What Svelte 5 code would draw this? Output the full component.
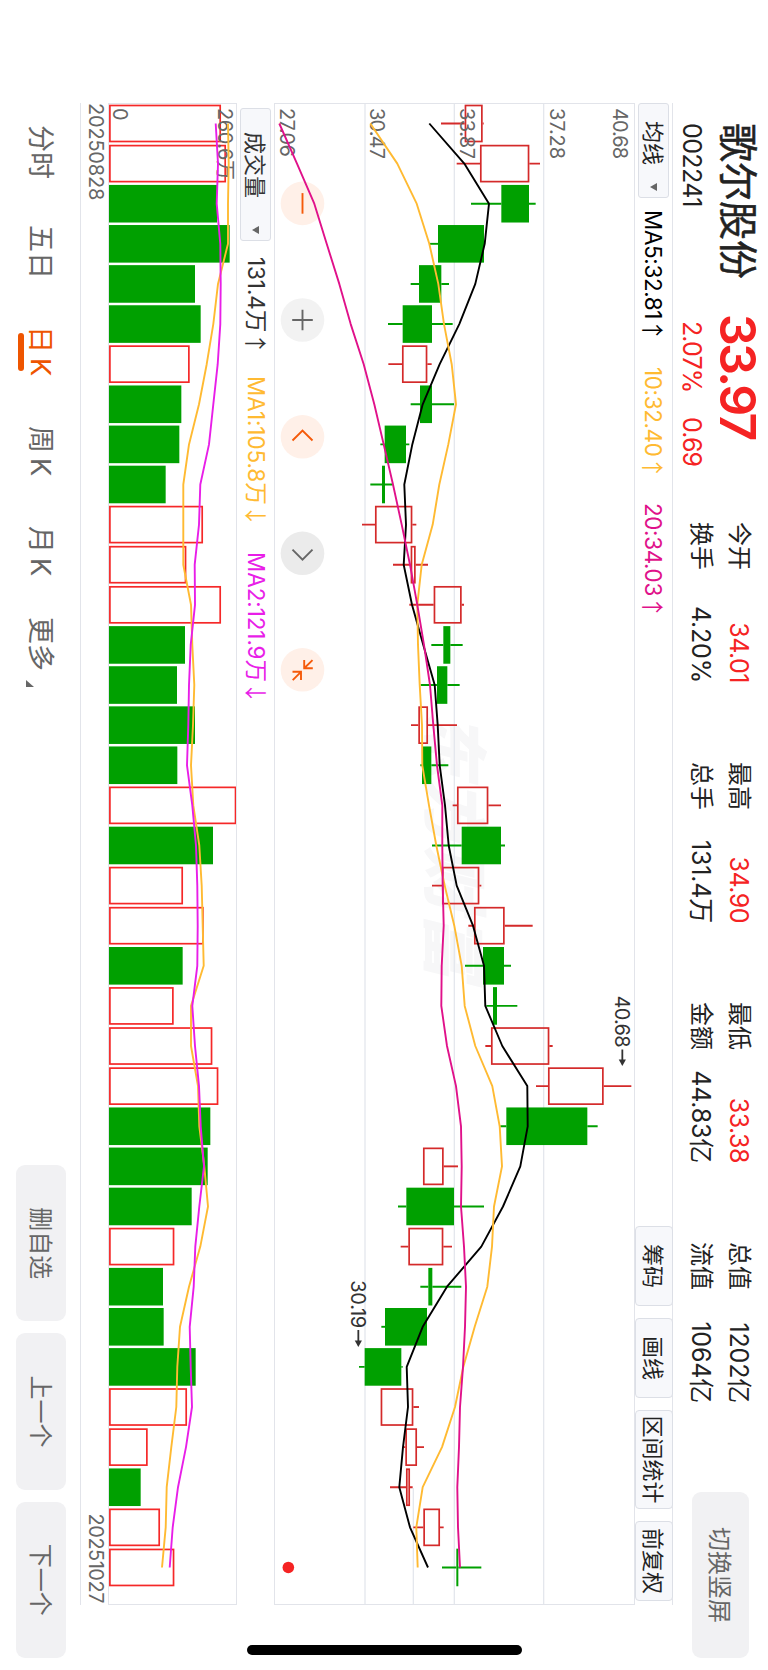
<script>
  const step = 40.11;
  const first = 19.5;
  const candleWidth = 37.6;

  // levels are measured in thirds of a pixel: [kind, low, body bottom, body top, high]
  const candles = [
    ['up', 543, 614, 668, 671],
    ['up', 590, 660, 808, 840],
    ['down', 633, 724, 807, 827],
    ['down', 509, 534, 672, 672],
    ['down', 452, 477, 544, 567],
    ['down', 384, 428, 516, 578],
    ['up', 385, 426, 502, 515],
    ['down', 452, 480, 516, 582],
    ['down', 361, 374, 438, 448],
    ['down', 331, 366, 375, 398],
    ['up', 306, 345, 457, 469],
    ['up', 399, 452, 467, 504],
    ['up', 448, 521, 605, 612],
    ['down', 514, 550, 571, 608],
    ['down', 482, 531, 562, 599],
    ['up', 453, 475, 504, 591],
    ['down', 481, 486, 514, 565],
    ['up', 578, 591, 685, 723],
    ['down', 516, 605, 723, 735],
    ['up', 516, 546, 658, 664],
    ['up', 625, 642, 734, 818],
    ['down', 615, 669, 732, 753],
    ['down', 679, 699, 711, 772],
    ['up', 676, 693, 868, 878],
    ['up', 828, 864, 1031, 1114],
    ['down', 721, 739, 982, 1013],
    ['up', 489, 489, 551, 594],
    ['down', 414, 439, 582, 672],
    ['up', 422, 445, 550, 576],
    ['down', 481, 505, 517, 604],
    ['down', 364, 375, 501, 501],
    ['down', 297, 314, 424, 428],
    ['up', 362, 362, 460, 477],
    ['up', 432, 436, 471, 492],
    ['up', 390, 438, 450, 458],
    ['up', 460, 490, 540, 551],
    ['down', 546, 589, 595, 664]
  ];

  const ma5 = [508, 613, 687, 674, 646, 598, 539, 488, 457, 433, 438, 431, 456, 490, 524, 533, 539, 555, 566, 590, 639, 672, 676, 727, 802, 803, 781, 729, 664, 561, 488, 440, 444, 429, 418, 450, 504];
  const ma10 = [331, 412, 470, 508, 535, 552, 575, 588, 565, 538, 518, 485, 472, 474, 479, 486, 487, 507, 529, 554, 583, 605, 614, 646, 697, 719, 726, 702, 696, 682, 644, 610, 585, 546, 488, 469, 473];
  const ma20 = [58, 111, 163, 200, 238, 272, 311, 343, 371, 399, 425, 450, 472, 492, 510, 520, 531, 547, 547, 548, 551, 545, 544, 561, 588, 603, 605, 603, 612, 618, 615, 609, 600, 597, 592, 594, 600];

  const volumes = [
    ['up', 663], ['up', 678], ['down', 651], ['down', 689], ['down', 585], ['down', 602], ['up', 569],
    ['down', 544], ['down', 538], ['down', 497], ['up', 609], ['up', 559], ['up', 663], ['down', 555],
    ['down', 531], ['down', 585], ['down', 532], ['up', 709], ['down', 639], ['up', 549], ['up', 611],
    ['down', 548], ['up', 521], ['up', 637], ['up', 655], ['down', 631], ['down', 623], ['down', 575],
    ['up', 523], ['down', 489], ['down', 491], ['down', 587], ['up', 561], ['up', 443], ['down', 422],
    ['up', 480], ['up', 523]
  ];
  const vma1 = [684, 686, 684, 684, 654, 640, 620, 597, 567, 550, 550, 550, 573, 577, 583, 579, 573, 580, 598, 605, 608, 611, 573, 573, 594, 598, 613, 624, 601, 567, 540, 532, 529, 514, 500, 497, 486];
  const vma2 = [647, 654, 650, 661, 662, 661, 653, 640, 627, 601, 597, 584, 585, 572, 567, 565, 561, 577, 588, 592, 593, 592, 577, 585, 597, 602, 612, 598, 586, 581, 569, 572, 576, 558, 534, 518, 509];

  const priceTop = 1122;
  const volumeTop = 708;

  const priceLabels = [
    [1081, '40.68'],
    [892, '37.28'],
    [623, '33.87'],
    [353, '30.47'],
    [83, '27.06']
  ];

  const stats = [
    ['今开', '34.01', true, '换手', '4.20%'],
    ['最高', '34.90', true, '总手', '131.4万'],
    ['最低', '33.38', true, '金额', '44.83亿'],
    ['总值', '1202亿', false, '流值', '1064亿']
  ];

  const tools = ['筹码', '画线', '区间统计', '前复权'];
  const periods = ['分时', '五日', '日K', '周K', '月K', '更多'];
  let period = '日K';

  const cx = (i) => first + i * step;
  const py = (v) => (priceTop - v) / 3;
  const vy = (v) => (volumeTop - v) / 3;
  const line = (values, y) => values.map((v, i) => `${cx(i).toFixed(1)},${y(v).toFixed(1)}`).join(' ');
</script>

<div class="screen">
  <div class="stage">
    <header>
      <div class="quote">
        <span class="name">歌尔股份</span>
        <span class="price">33.97</span>
        <span class="code">002241</span>
        <span class="change"><span class="pct">2.07%</span><span>0.69</span></span>
      </div>
      <div class="stats">
        {#each stats as [a, av, red, b, bv]}
          <div class="stat">
            <span>{a}</span><span class="num" class:red>{av}</span>
            <span>{b}</span><span class="num">{bv}</span>
          </div>
        {/each}
      </div>
      <button class="soft switch">切换竖屏</button>
    </header>

    <div class="bar price-bar">
      <button class="select">均线<i></i></button>
      <span class="m5">MA5:32.81<b class="arr">↑</b></span>
      <span class="m10">10:32.40<b class="arr">↑</b></span>
      <span class="m20">20:34.03<b class="arr">↑</b></span>
      <div class="tools">
        {#each tools as tool}
          <button class:wide={tool.length > 3}>{tool}</button>
        {/each}
      </div>
    </div>

    <svg class="price-chart" width="1500" height="359" viewBox="0 0 1500 359">
      <text class="mark" x="607" y="204" textLength="268">东方财富</text>
      <g class="grid">
        <path d="M0 {py(851)}H1500M0 {py(583)}H1500M0 {py(315)}H1500" />
        <path d="M1384 {py(460)}H1500" />
      </g>

      <g transform="translate(99.4 331.5)">
        <circle r="21.8" fill="#fff0e8" />
        <path class="icon hot" d="M-10.3 0H10.3" />
      </g>
      <g transform="translate(216 331.5)">
        <circle r="21.8" fill="#f2f2f2" />
        <path class="icon" d="M-10.3 0H10.3M0 -10.3V10.3" />
      </g>
      <g transform="translate(332.8 331.5)">
        <circle r="21.8" fill="#fff0e8" />
        <path class="icon hot" d="M3.7 -10L-6.3 0L3.7 10" />
      </g>
      <g transform="translate(449.3 331.5)">
        <circle r="21.8" fill="#ebebeb" />
        <path class="icon" d="M-3.7 -10L6.3 0L-3.7 10" />
      </g>
      <g transform="translate(565.8 331.5)">
        <circle r="21.8" fill="#fff0e8" />
        <path class="icon hot" d="M-9.7 -1.7H-1.6V-10.3M-9.7 -10L-1.6 -1.7M10.3 1.5H2V10M10.3 9.8L2 1.5" />
      </g>

      {#each candles as [kind, low, bottom, top, high], i}
        <g class={kind}>
          <path class="wick" d="M{cx(i)} {py(high)}V{py(top)}M{cx(i)} {py(bottom)}V{py(low)}" />
          {#if kind === 'up'}
            <rect
              x={cx(i) - candleWidth / 2 + 0.8}
              y={py(top) + 0.8}
              width={candleWidth - 1.6}
              height={(top - bottom) / 3 - 1.6}
            />
          {:else}
            <rect x={cx(i) - candleWidth / 2} y={py(top)} width={candleWidth} height={(top - bottom) / 3} />
          {/if}
        </g>
      {/each}

      {#each priceLabels as [v, label]}
        <text class="axis" x="4" y={py(v) + 7.2} textLength={label === '27.06' ? 49 : 51}>{label}</text>
      {/each}

      <polyline points={line(ma5, py)} stroke="#000" />
      <polyline points={line(ma10, py)} stroke="#ffba32" />
      <polyline points={line(ma20, py)} stroke="#e0118a" />

      <text class="note" x="891.5" y={py(1087) + 7.2} textLength="52">40.68</text>
      <path class="note-arrow" d="M945.5 {py(1087)}h11" />
      <path fill="#333" d="M955.5 {py(1087) - 3.6}l6.5 3.6l-6.5 3.6z" />
      <text class="note" x="1176.2" y={py(295) + 7.2} textLength="48">30.19</text>
      <path class="note-arrow" d="M1226 {py(295)}h11" />
      <path fill="#333" d="M1236.5 {py(295) - 3.6}l6.5 3.6l-6.5 3.6z" />

      <circle cx={cx(36)} cy={py(85)} r="5.8" fill="#f52323" />
    </svg>

    <div class="bar volume-bar">
      <button class="select">成交量<i></i></button>
      <span class="vol">131.4万<b class="arr">↑</b></span>
      <span class="v1">MA1:105.8万<b class="arr">↓</b></span>
      <span class="v2">MA2:121.9万<b class="arr">↓</b></span>
    </div>

    <svg class="volume-chart" width="1500" height="127" viewBox="0 0 1500 127">
      {#each volumes as [kind, v], i}
        <g class={kind}>
          {#if kind === 'up'}
            <rect x={cx(i) - candleWidth / 2 + 0.8} y={vy(v) + 0.8} width={candleWidth - 1.6} height={126.1 - vy(v) - 0.8} />
          {:else}
            <rect x={cx(i) - candleWidth / 2} y={vy(v)} width={candleWidth} height={127 - vy(v)} />
          {/if}
        </g>
      {/each}
      <text class="axis" x="4" y="18" textLength="72">260.6万</text>
      <text class="axis" x="4" y="122.8">0</text>
      <polyline points={line(vma1, vy)} stroke="#ffba32" />
      <polyline points={line(vma2, vy)} stroke="#e81ee8" />
    </svg>

    <div class="dates">
      <span>20250828</span>
      <span class="to">20251027</span>
    </div>

    <footer>
      <nav>
        {#each periods as name}
          <button
            class:k={name.endsWith('K')}
            class:active={name === period}
            class:more={name === '更多'}
            on:click={() => (period = name)}
          >
            {name}
          </button>
        {/each}
      </nav>
      <div class="actions">
        <button class="soft">删自选</button>
        <button class="soft">上一个</button>
        <button class="soft">下一个</button>
      </div>
    </footer>

    <div class="home"></div>
  </div>
</div>

<style>
  :global(body) {
    margin: 0;
    background: #fff;
  }

  .screen {
    width: 768px;
    height: 1670px;
    overflow: hidden;
    background: #fff;
  }

  /* landscape layout turned a quarter clockwise */
  .stage {
    position: relative;
    display: flex;
    flex-direction: column;
    width: 1670px;
    height: 768px;
    transform: translateX(768px) rotate(90deg);
    transform-origin: 0 0;
    font-family: Inter, 'Noto Sans CJK SC', sans-serif;
    color: #222;
  }

  button {
    font: inherit;
    color: inherit;
    padding: 0 0 3px;
    border: none;
    background: none;
    white-space: nowrap;
    cursor: pointer;
  }

  header {
    display: flex;
    height: 95px;
    padding-left: 123px;
    white-space: nowrap;
  }

  .quote {
    display: grid;
    grid-template-columns: 191px 208px;
    grid-template-rows: 59px 34px;
    align-items: center;
    font-size: 25px;
    line-height: 1;
  }

  .name {
    font-size: 39px;
    color: #222;
    -webkit-text-stroke: 0.5px #222;
  }

  .price {
    font-size: 50px;
    font-weight: 600;
    letter-spacing: -2.6px;
    color: #f52323;
  }

  .code {
    letter-spacing: -0.6px;
  }

  .change {
    display: flex;
    padding-left: 7px;
    letter-spacing: -0.9px;
    color: #f52323;
  }

  .pct {
    width: 96px;
  }

  .stats {
    display: flex;
    gap: 79px;
    padding-top: 10px;
  }

  .stat {
    display: grid;
    grid-template-columns: 50px 111px;
    grid-auto-rows: 38.3px;
    align-items: center;
    height: 77px;
    font-size: 24px;
    line-height: 1;
  }

  .num {
    text-align: right;
    font-size: 25px;
    letter-spacing: -0.2px;
  }

  .red {
    letter-spacing: -0.5px;
    color: #f52323;
  }

  .soft {
    width: 156.3px;
    height: 50px;
    border-radius: 9px;
    background: #f1f1f3;
    font-size: 24px;
    color: #666;
  }

  .switch {
    width: 166px;
    height: 57px;
    margin: 19px 0 0 89px;
  }

  .bar {
    display: flex;
    align-items: center;
    box-sizing: border-box;
    font-size: 22.5px;
    letter-spacing: -0.4px;
    white-space: nowrap;
  }

  .bar > span {
    display: flex;
    align-items: center;
    line-height: 30px;
  }

  .arr {
    font-family: 'Noto Sans CJK SC', sans-serif;
    font-weight: 400;
    letter-spacing: 0;
    margin-top: -2px;
  }

  .price-bar {
    width: 1502px;
    height: 38px;
    margin-left: 103px;
    border-top: 1px solid #e2e4ea;
  }

  .select {
    display: flex;
    align-items: center;
    justify-content: space-between;
    box-sizing: border-box;
    width: 95px;
    height: 31px;
    padding: 0 6px 3px 17px;
    border: 1px solid #dcdfe6;
    border-radius: 3px;
    background: #f7f8fb;
    font-size: 22px;
    letter-spacing: 0;
  }

  .select i {
    margin-top: 3px;
    border: 4.2px solid transparent;
    border-top: 7.5px solid #666;
    border-bottom: none;
  }

  .m5 {
    width: 157px;
    margin-left: 12px;
    color: #000;
  }

  .m10 {
    width: 136px;
    color: #ffba32;
  }

  .m20 {
    color: #e0118a;
  }

  .tools {
    display: flex;
    gap: 12px;
    margin: -1px 4px 0 auto;
  }

  .tools button {
    box-sizing: border-box;
    width: 80px;
    height: 38px;
    border: 1px solid #dcdfe6;
    border-radius: 4px;
    background: #f7f8fb;
    font-size: 22px;
    letter-spacing: 0;
  }

  .tools .wide {
    width: 99px;
  }

  svg {
    display: block;
    flex: none;
    margin: 1px 0 0 104px;
    overflow: visible;
    outline: 1px solid #e2e4ea;
  }

  polyline {
    fill: none;
    stroke-width: 1.9;
    stroke-linejoin: round;
  }

  .grid path {
    stroke: #e4e7ed;
    stroke-width: 1.3;
  }

  .mark {
    font-size: 66px;
    font-weight: 900;
    font-style: italic;
    fill: #f7f7f8;
  }

  .icon {
    fill: none;
    stroke: #666;
    stroke-width: 1.9;
  }

  .hot {
    stroke: #f55a0a;
  }

  .wick {
    stroke-width: 1.9;
  }

  .up rect {
    fill: none;
    stroke: #d42a2a;
    stroke-width: 1.7;
  }

  .up .wick {
    stroke: #d42a2a;
  }

  .volume-chart .up rect {
    stroke: #f52828;
  }

  .down rect {
    fill: #00a000;
  }

  .down .wick {
    stroke: #00a000;
  }

  .axis {
    font-size: 20px;
    fill: #666;
  }

  .note {
    font-size: 20px;
    fill: #333;
  }

  .note-arrow {
    stroke: #333;
    stroke-width: 1.8;
  }

  .volume-bar {
    height: 38px;
    margin-left: 108px;
    letter-spacing: -0.1px;
    color: #333;
  }

  .volume-bar .select {
    width: 133px;
    padding-left: 23px;
  }

  .vol {
    width: 119px;
    margin-left: 16px;
  }

  .v1 {
    width: 176px;
    color: #ffba32;
  }

  .v2 {
    color: #e81ee8;
  }

  .dates {
    display: flex;
    justify-content: space-between;
    align-items: center;
    box-sizing: border-box;
    width: 1502px;
    height: 29px;
    margin-left: 103px;
    padding: 0 2px 3px 0;
    border-bottom: 1px solid #e2e4ea;
    font-size: 20px;
    letter-spacing: -0.2px;
    color: #666;
  }

  .to {
    letter-spacing: -0.5px;
  }

  footer {
    display: flex;
    justify-content: space-between;
    align-items: center;
    box-sizing: border-box;
    height: 80px;
    padding: 0 12px 2px 125px;
  }

  nav {
    display: flex;
    font-size: 27px;
    color: #666;
  }

  nav button {
    position: relative;
    width: 100px;
    height: 51px;
    text-align: left;
  }

  nav button:nth-child(5) {
    width: 92px;
  }

  nav .k {
    left: 1px;
    letter-spacing: 5px;
  }

  nav .active {
    color: #ee5500;
  }

  nav .active::after {
    content: '';
    position: absolute;
    left: 7px;
    bottom: 3px;
    width: 38px;
    height: 6px;
    border-radius: 3px;
    background: #ee5500;
  }

  nav .more::after {
    content: '';
    position: absolute;
    left: 63px;
    bottom: 11px;
    border-left: 7px solid transparent;
    border-bottom: 8px solid #666;
  }

  .actions {
    display: flex;
    gap: 12px;
  }

  .home {
    position: absolute;
    left: 1645px;
    top: 246px;
    width: 10px;
    height: 275px;
    border-radius: 5px;
    background: #000;
  }
</style>
